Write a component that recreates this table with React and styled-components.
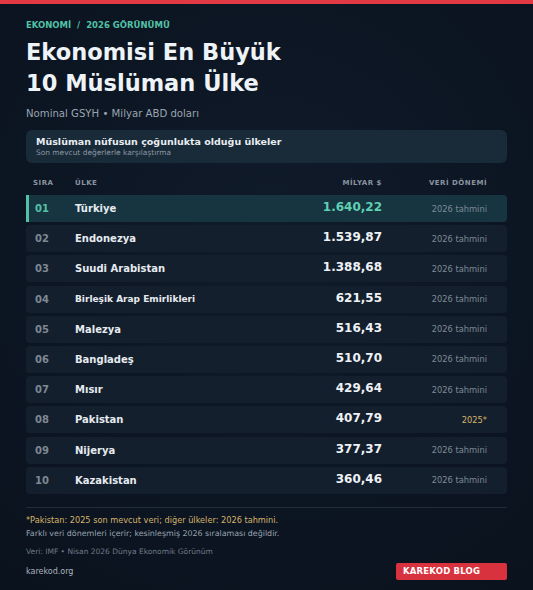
import React from 'react';
import styled, { createGlobalStyle } from 'styled-components';

const GlobalStyle = createGlobalStyle`
  html, body {
    margin: 0;
    padding: 0;
    background: #0c1522;
  }
  body {
    font-family: "DejaVu Sans", "Noto Sans", sans-serif;
  }
`;

const Page = styled.div`
  width: 533px;
  height: 590px;
  background: radial-gradient(circle at 50% 40%, #101b2a 0%, #0c1522 60%, #0a121d 100%);
  border-top: 4px solid #e23a45;
  box-sizing: border-box;
  padding: 15px 26px 0;
  overflow: hidden;
`;

const Crumb = styled.div`
  font-size: 8.5px;
  font-weight: 700;
  color: #52c2a6;
  line-height: 12px;
`;

const Title = styled.h1`
  margin: 6px 0 0;
  font-size: 22.5px;
  line-height: 31px;
  font-weight: 700;
  color: #eef3f8;
`;

const Subtitle = styled.div`
  margin-top: 8px;
  font-size: 10.15px;
  color: #9aa4b0;
  line-height: 14px;
`;

const InfoBox = styled.div`
  margin-top: 9px;
  background: #192a38;
  border-radius: 6px;
  padding: 5px 10px 5px;
`;

const InfoTitle = styled.div`
  font-size: 9.5px;
  font-weight: 700;
  color: #e8edf2;
  line-height: 13px;
`;

const InfoSub = styled.div`
  font-size: 7.45px;
  color: #8b97a3;
  line-height: 10px;
`;

const grid = (first) => `
  display: grid;
  grid-template-columns: ${first}px 1fr 120px 105px;
  align-items: center;
`;

const HeadRow = styled.div`
  ${grid(42)}
  margin-top: 13px;
  padding: 0 20px 0 7px;
  height: 14px;
  font-size: 7px;
  font-weight: 700;
  letter-spacing: 0.5px;
  color: #8a94a0;
`;

const HeadCell = styled.div`
  text-align: ${(p) => (p.$right ? 'right' : 'left')};
`;

const Rows = styled.div`
  margin-top: 5px;
  display: flex;
  flex-direction: column;
  gap: 3.2px;
`;

const Row = styled.div`
  ${grid(40)}
  height: 27px;
  border-radius: 4px;
  padding: 0 20px 0 ${(p) => (p.$active ? '6px' : '9px')};
  background: ${(p) => (p.$active ? '#173540' : '#141f2d')};
  border-left: ${(p) => (p.$active ? '3px solid #52c2a6' : 'none')};
  border-top-left-radius: ${(p) => (p.$active ? '0' : '4px')};
  border-bottom-left-radius: ${(p) => (p.$active ? '0' : '4px')};
`;

const Rank = styled.div`
  font-size: 10px;
  font-weight: 700;
  color: ${(p) => (p.$active ? '#52c2a6' : '#7d8894')};
`;

const Name = styled.div`
  font-size: ${(p) => (p.$small ? '9px' : '10px')};
  font-weight: 700;
  color: #e6ebf0;
  white-space: nowrap;
`;

const Value = styled.div`
  text-align: right;
  font-size: 12px;
  font-weight: 700;
  color: ${(p) => (p.$active ? '#5fd0b3' : '#eef2f6')};
  margin-top: -3px;
`;

const Period = styled.div`
  text-align: right;
  font-size: 8.3px;
  color: ${(p) => (p.$warn ? '#d5b36b' : '#7f8a96')};
`;

const Divider = styled.div`
  margin-top: 13px;
  height: 1px;
  background: #1f2c3a;
`;

const Note = styled.div`
  margin-top: ${(p) => p.$mt || '0'};
  font-size: ${(p) => p.$size || '8.2px'};
  color: ${(p) => p.$color || '#9aa4b0'};
  line-height: 12px;
`;

const Footer = styled.div`
  display: flex;
  justify-content: space-between;
  align-items: center;
  margin-top: 5px;
`;

const Site = styled.div`
  font-size: 8px;
  color: #aab3bd;
`;

const Badge = styled.div`
  width: 111px;
  height: 17px;
  box-sizing: border-box;
  background: #d8323f;
  border-radius: 2px;
  color: #ffffff;
  font-size: 8.5px;
  font-weight: 700;
  letter-spacing: 0.2px;
  line-height: 17px;
  padding-left: 7px;
`;

const data = [
  ['01', 'Türkiye', '1.640,22', '2026 tahmini'],
  ['02', 'Endonezya', '1.539,87', '2026 tahmini'],
  ['03', 'Suudi Arabistan', '1.388,68', '2026 tahmini'],
  ['04', 'Birleşik Arap Emirlikleri', '621,55', '2026 tahmini'],
  ['05', 'Malezya', '516,43', '2026 tahmini'],
  ['06', 'Bangladeş', '510,70', '2026 tahmini'],
  ['07', 'Mısır', '429,64', '2026 tahmini'],
  ['08', 'Pakistan', '407,79', '2025*'],
  ['09', 'Nijerya', '377,37', '2026 tahmini'],
  ['10', 'Kazakistan', '360,46', '2026 tahmini'],
];

export default function App() {
  return (
    <>
      <GlobalStyle />
      <Page>
        <Crumb>EKONOMİ &nbsp;/&nbsp; 2026 GÖRÜNÜMÜ</Crumb>
        <Title>
          Ekonomisi En Büyük
          <br />
          10 Müslüman Ülke
        </Title>
        <Subtitle>Nominal GSYH • Milyar ABD doları</Subtitle>
        <InfoBox>
          <InfoTitle>Müslüman nüfusun çoğunlukta olduğu ülkeler</InfoTitle>
          <InfoSub>Son mevcut değerlerle karşılaştırma</InfoSub>
        </InfoBox>
        <HeadRow>
          <HeadCell>SIRA</HeadCell>
          <HeadCell>ÜLKE</HeadCell>
          <HeadCell $right>MİLYAR $</HeadCell>
          <HeadCell $right>VERİ DÖNEMİ</HeadCell>
        </HeadRow>
        <Rows>
          {data.map(([rank, name, value, period], i) => (
            <Row key={rank} $active={i === 0}>
              <Rank $active={i === 0}>{rank}</Rank>
              <Name $small={name.length > 20}>{name}</Name>
              <Value $active={i === 0}>{value}</Value>
              <Period $warn={period === '2025*'}>{period}</Period>
            </Row>
          ))}
        </Rows>
        <Divider />
        <Note $mt="6px" $color="#d5b36b">*Pakistan: 2025 son mevcut veri; diğer ülkeler: 2026 tahmini.</Note>
        <Note $mt="2px" $size="7.9px">Farklı veri dönemleri içerir; kesinleşmiş 2026 sıralaması değildir.</Note>
        <Note $mt="6px" $size="7.5px" $color="#6f7a86">Veri: IMF • Nisan 2026 Dünya Ekonomik Görünüm</Note>
        <Footer>
          <Site>karekod.org</Site>
          <Badge>KAREKOD BLOG</Badge>
        </Footer>
      </Page>
    </>
  );
}
